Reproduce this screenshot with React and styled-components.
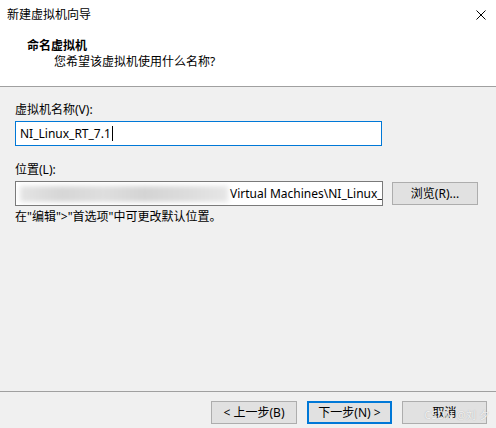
import React from "react";
import styled, { createGlobalStyle } from "styled-components";

const GlobalStyle = createGlobalStyle`
    html, body {
        margin: 0;
        padding: 0;
        background: #f0f0f0;
    }
    body {
        font-family: "Noto Sans", "Noto Sans CJK SC", sans-serif;
        font-size: 12px;
        color: #000;
    }
`;

const Window = styled.div`
    position: relative;
    width: 496px;
    height: 428px;
    display: flex;
    flex-direction: column;
    background: #f0f0f0;
    overflow: hidden;
`;

const Header = styled.div`
    height: 86px;
    background: #ffffff;
    border-bottom: 1px solid #a0a0a0;
    display: flex;
    flex-direction: column;
`;

const TitleBar = styled.div`
    height: 30px;
    display: flex;
    align-items: center;
    justify-content: space-between;
    padding: 0 10px 0 7px;
    font-size: 12px;
    line-height: 16px;
`;

const CloseButton = styled.svg`
    width: 10px;
    height: 10px;
    margin-top: -1px;
`;

const Heading = styled.div`
    margin-top: 8px;
    padding-left: 27px;
    font-weight: bold;
    line-height: 16px;
`;

const SubHeading = styled.div`
    padding-left: 54px;
    line-height: 16px;
`;

const Body = styled.div`
    padding: 15px 15px 0;
    display: flex;
    flex-direction: column;
`;

const Label = styled.div`
    line-height: 16px;
    margin-top: ${({ $gap }) => $gap || 0}px;
`;

const Field = styled.div`
    box-sizing: border-box;
    margin-top: 3px;
    width: ${({ $width }) => $width}px;
    height: 25px;
    background: #ffffff;
    border: 1px solid ${({ $focused }) => ($focused ? "#0078d7" : "#7a7a7a")};
    padding: 0 4px;
    display: flex;
    align-items: center;
    white-space: nowrap;
    overflow: hidden;
    line-height: 16px;
`;

const Caret = styled.span`
    display: inline-block;
    width: 1px;
    height: 15px;
    background: #000;
    margin-left: 1px;
`;

const Row = styled.div`
    display: flex;
    align-items: center;
    gap: 9px;
`;

const Redacted = styled.span`
    flex: none;
    width: 208px;
    height: 16px;
    margin-right: 2px;
    background: linear-gradient(90deg, #e4e4e4 0%, #d6d6d6 20%, #dedede 40%, #d4d4d4 60%, #dcdcdc 80%, #e6e6e6 100%);
    filter: blur(2.5px);
`;

const Button = styled.button`
    box-sizing: border-box;
    width: ${({ $width }) => $width || 86}px;
    height: 23px;
    padding: 0;
    font: inherit;
    line-height: 16px;
    color: #000;
    background: #e1e1e1;
    border: ${({ $default }) => ($default ? "2px solid #0078d7" : "1px solid #adadad")};
    border-radius: 0;
    display: flex;
    align-items: center;
    justify-content: center;
`;

const Hint = styled.div`
    margin-top: 3px;
    line-height: 16px;
`;

const Footer = styled.div`
    margin-top: auto;
    border-top: 1px solid #a0a0a0;
    padding: 9px 9px 4px;
    display: flex;
    justify-content: flex-end;
    gap: 10px;
`;

const Watermark = styled.div`
    position: absolute;
    right: 6px;
    bottom: 7px;
    font-size: 10px;
    line-height: 12px;
    color: rgba(255, 255, 255, 0.85);
    text-shadow: 0 0 1px rgba(120, 120, 120, 0.6);
    letter-spacing: 0.5px;
`;

const App = () => {
    return (
        <>
            <GlobalStyle />
            <Window>
                <Header>
                    <TitleBar>
                        <span>新建虚拟机向导</span>
                        <CloseButton viewBox="0 0 10 10">
                            <path d="M0.5 0.5 L9.5 9.5 M9.5 0.5 L0.5 9.5" stroke="#000" strokeWidth="1" fill="none" />
                        </CloseButton>
                    </TitleBar>
                    <Heading>命名虚拟机</Heading>
                    <SubHeading>您希望该虚拟机使用什么名称?</SubHeading>
                </Header>
                <Body>
                    <Label>虚拟机名称(V):</Label>
                    <Field $width={367} $focused>
                        NI_Linux_RT_7.1<Caret />
                    </Field>
                    <Label $gap={16}>位置(L):</Label>
                    <Row>
                        <Field $width={368}>
                            <Redacted />
                            Virtual Machines\NI_Linux_RT_7.1
                        </Field>
                        <Button $width={86} style={{ marginTop: 3 }}>浏览(R)...</Button>
                    </Row>
                    <Hint>在"编辑"&gt;"首选项"中可更改默认位置。</Hint>
                </Body>
                <Footer>
                    <Button $width={86}>&lt; 上一步(B)</Button>
                    <Button $width={85} $default>下一步(N) &gt;</Button>
                    <Button $width={85}>取消</Button>
                </Footer>
                <Watermark>CSDN @刘 夕</Watermark>
            </Window>
        </>
    );
};

export default App;
